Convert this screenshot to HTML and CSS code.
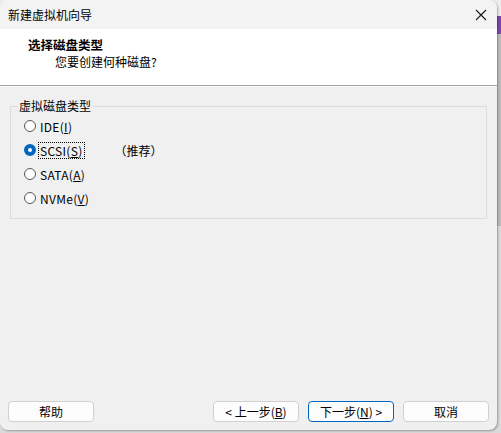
FILE: index.html
```html
<!DOCTYPE html>
<html lang="zh-CN">
<head>
<meta charset="UTF-8">
<title>新建虚拟机向导</title>
<link rel="stylesheet" href="styles.css">
</head>
<body>
    <div class="window">
        <div class="titlebar">
            <span class="title">新建虚拟机向导</span>
            <span class="close">
                <svg width="12" height="12" viewBox="0 0 12 12"><path d="M1 1L11 11M11 1L1 11" stroke="#1a1a1a" stroke-width="1.1" fill="none"/></svg>
            </span>
        </div>
        <div class="header">
            <div class="heading">选择磁盘类型</div>
            <div class="subheading">您要创建何种磁盘?</div>
        </div>
        <div class="content">
            <fieldset class="group">
                <legend>虚拟磁盘类型</legend>
                <label class="option"><span class="radio"></span><span class="text">IDE(<u>I</u>)</span></label>
                <label class="option"><span class="radio checked"></span><span class="text focus">SCSI(<u>S</u>)</span><span class="hint">（推荐）</span></label>
                <label class="option"><span class="radio"></span><span class="text">SATA(<u>A</u>)</span></label>
                <label class="option"><span class="radio"></span><span class="text">NVMe(<u>V</u>)</span></label>
            </fieldset>
        </div>
        <div class="footer">
            <button class="btn">帮助</button>
            <div class="spacer"></div>
            <button class="btn">&lt; 上一步(<u>B</u>)</button>
            <button class="btn default">下一步(<u>N</u>) &gt;</button>
            <button class="btn">取消</button>
        </div>
    </div>
</body>
</html>
```

FILE: styles.css
```css
body {
    margin: 0;
    height: 433px;
    background: linear-gradient(to bottom, #ececec 0 16px, #7d45b0 16px 34px, #bcbcbc 34px 226px, #dadada 226px);
    font-family: "Noto Sans CJK SC", "Noto Sans", sans-serif;
    font-size: 12px;
    color: #000;
}
.window {
    width: 497px;
    height: 430px;
    background: #f0f0f0;
    border-radius: 8px;
    overflow: hidden;
    display: flex;
    flex-direction: column;
    box-shadow: 1px 1px 2px rgba(0, 0, 0, 0.3);
}
.titlebar {
    height: 29px;
    background: #f3f3f3;
    display: flex;
    align-items: center;
    justify-content: space-between;
    padding: 0 10px 0 8px;
}
.title {
    line-height: 16px;
}
.close {
    display: flex;
}
.header {
    height: 57px;
    box-sizing: border-box;
    background: #fff;
    padding: 8px 0 0 28px;
    border-bottom: 1px solid #a0a0a0;
}
.heading {
    font-weight: bold;
    line-height: 16px;
    font-size: 12.5px;
}
.subheading {
    line-height: 16px;
    padding: 1px 0 0 27px;
}
.content {
    flex: 1;
    border-top: 1px solid #fff;
    padding-top: 11px;
}
.group {
    margin: 0 10px;
    padding: 0 13px 8px;
    border: 1px solid #dcdcdc;
    min-width: 0;
}
.group legend {
    padding: 0 2px;
    margin-left: -7px;
    line-height: 16px;
}
.option {
    display: flex;
    align-items: center;
    height: 24px;
}
.radio {
    width: 12px;
    height: 12px;
    box-sizing: border-box;
    border: 1px solid #555;
    border-radius: 50%;
    background: #fff;
    margin-right: 4px;
}
.radio.checked {
    border: 4px solid #0067c0;
    background: #fff;
}
.text {
    line-height: 15px;
    padding: 0 1px;
    border: 1px dotted transparent;
    margin-left: -2px;
    letter-spacing: 0.3px;
}
.text.focus {
    border-color: #000;
}
.hint {
    margin-left: 30px;
}
.footer {
    display: flex;
    gap: 9px;
    padding: 0 8px 8px;
}
.spacer {
    flex: 1;
}
.btn {
    width: 86px;
    height: 21px;
    padding: 0;
    font-family: inherit;
    font-size: 12px;
    color: #000;
    background: #fdfdfd;
    border: 1px solid #d0d0d0;
    border-radius: 4px;
    line-height: 18px;
}
.btn.default {
    border-color: #0067c0;
}
```
